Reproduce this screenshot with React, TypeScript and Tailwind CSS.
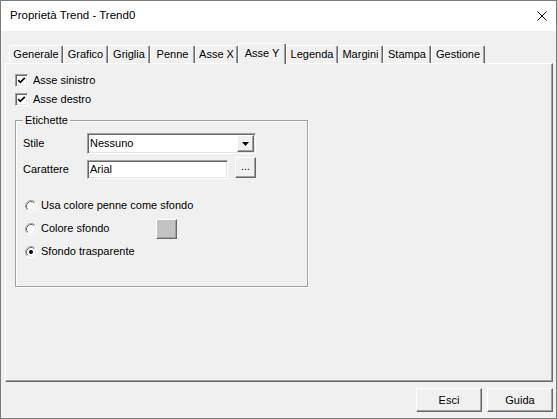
import React from "react";

const tabs: { label: string; cls: string; active?: boolean }[] = [
  { label: "Generale", cls: "w-[54px]" },
  { label: "Grafico", cls: "w-[45px]" },
  { label: "Griglia", cls: "w-[42px]" },
  { label: "Penne", cls: "w-[45px]" },
  { label: "Asse X", cls: "w-[43px]" },
  { label: "Asse Y", cls: "w-[48px]", active: true },
  { label: "Legenda", cls: "w-[52px]" },
  { label: "Margini", cls: "w-[45px]" },
  { label: "Stampa", cls: "w-[48px]" },
  { label: "Gestione", cls: "w-[54px]" },
];

const raised =
  "border border-t-white border-l-white border-r-[#696969] border-b-[#696969] shadow-[inset_-1px_-1px_0_#a0a0a0]";
const sunken =
  "border border-t-[#a0a0a0] border-l-[#a0a0a0] border-r-white border-b-white shadow-[inset_1px_1px_0_#696969,inset_-1px_-1px_0_#e3e3e3] bg-white";

function Check() {
  return (
    <div className={`w-[13px] h-[13px] flex items-center justify-center ${sunken}`}>
      <svg width="9" height="9" viewBox="0 0 9 9">
        <polyline points="1.2,4.2 3.3,6.4 7.8,1.8" fill="none" stroke="#000" strokeWidth="1.7" />
      </svg>
    </div>
  );
}

function Radio({ on }: { on?: boolean }) {
  return (
    <svg width="12" height="12" viewBox="0 0 12 12" className="shrink-0">
      <circle cx="6" cy="6" r="5.5" fill="#fff" />
      <path d="M2.11 9.89 A5.5 5.5 0 0 1 9.89 2.11" fill="none" stroke="#a0a0a0" />
      <path d="M9.89 2.11 A5.5 5.5 0 0 1 2.11 9.89" fill="none" stroke="#ffffff" />
      <path d="M2.82 9.18 A4.5 4.5 0 0 1 9.18 2.82" fill="none" stroke="#696969" />
      <path d="M9.18 2.82 A4.5 4.5 0 0 1 2.82 9.18" fill="none" stroke="#e3e3e3" />
      {on && <circle cx="6" cy="6" r="2" fill="#000" />}
    </svg>
  );
}

export default function App() {
  return (
    <div className="w-[557px] h-[419px] border border-[#7a7a7a] bg-[#f0f0f0] flex flex-col font-['Liberation_Sans',Arial,sans-serif] text-[11px] text-black leading-none">
      {/* Title bar */}
      <div className="h-[30px] bg-white flex items-center justify-between pl-[9px] pr-[9px] shrink-0">
        <span className="text-[11.5px]">Proprietà Trend - Trend0</span>
        <svg width="10" height="10" viewBox="0 0 10 10">
          <path d="M0.5 0.5 L9.5 9.5 M9.5 0.5 L0.5 9.5" stroke="#000" strokeWidth="1" />
        </svg>
      </div>

      {/* Body */}
      <div className="flex-1 flex flex-col pl-[4px] pr-[3px]">
        {/* Tabs */}
        <div className="h-[20px] mt-[12px] flex items-end pl-[4px]">
          {tabs.map((t) =>
            t.active ? (
              <div
                key={t.label}
                className={`${t.cls} h-[21px] -mb-[1px] relative z-10 bg-[#f0f0f0] flex items-center justify-center border-t border-l border-r border-t-white border-l-white border-r-[#696969] shadow-[inset_-1px_0_0_#a0a0a0] rounded-t-[2px] pb-[1px]`}
              >
                {t.label}
              </div>
            ) : (
              <div
                key={t.label}
                className={`${t.cls} h-[18px] flex items-center justify-center border-t border-l border-r border-t-white border-l-white border-r-[#696969] shadow-[inset_-1px_0_0_#a0a0a0] rounded-t-[2px]`}
              >
                {t.label}
              </div>
            )
          )}
        </div>

        {/* Panel */}
        <div className="h-[319px] border border-t-white border-l-white border-r-[#696969] border-b-[#696969] shadow-[inset_-1px_-1px_0_#a0a0a0] flex flex-col pl-[9px] pt-[7px]">
          <div className="h-[19px] flex items-center gap-[5px]">
            <Check />
            <span>Asse sinistro</span>
          </div>
          <div className="h-[19px] flex items-center gap-[5px]">
            <Check />
            <span>Asse destro</span>
          </div>

          {/* Group box */}
          <div className="mt-[11px] w-[293px] h-[167px] border border-[#a0a0a0] shadow-[1px_1px_0_#fff,inset_1px_1px_0_#fff] flex flex-col">
            <div className="-mt-[7px] ml-[7px] px-[2px] w-fit bg-[#f0f0f0] leading-[13px]">Etichette</div>

            <div className="mt-[6px] h-[21px] flex items-center pl-[7px]">
              <span className="w-[64px]">Stile</span>
              <div className={`w-[169px] h-[21px] flex items-center justify-between ${sunken}`}>
                <span className="pl-[2px]">Nessuno</span>
                <div className={`w-[17px] h-[17px] mr-[1px] bg-[#f0f0f0] flex items-center justify-center ${raised}`}>
                  <svg width="7" height="4" viewBox="0 0 7 4">
                    <path d="M0 0 H7 L3.5 4 Z" fill="#000" />
                  </svg>
                </div>
              </div>
            </div>

            <div className="mt-[3px] h-[22px] flex pl-[7px]">
              <span className="w-[64px] self-end leading-[19px]">Carattere</span>
              <div className={`w-[141px] h-[19px] self-end flex items-center ${sunken}`}>
                <span className="pl-[2px]">Arial</span>
              </div>
              <div className={`ml-[7px] w-[21px] h-[21px] bg-[#f0f0f0] flex items-end justify-center pb-[5px] ${raised}`}>
                ...
              </div>
            </div>

            <div className="mt-[15px] h-[23px] flex items-center pl-[9px] gap-[4px]">
              <Radio />
              <span>Usa colore penne come sfondo</span>
            </div>
            <div className="h-[23px] flex items-center pl-[9px] gap-[4px]">
              <Radio />
              <span className="w-[115px]">Colore sfondo</span>
              <div className={`w-[21px] h-[20px] bg-[#c3c3c3] -ml-[4px] ${raised}`} />
            </div>
            <div className="h-[23px] flex items-center pl-[9px] gap-[4px]">
              <Radio on />
              <span>Sfondo trasparente</span>
            </div>
          </div>
        </div>

        {/* Buttons */}
        <div className="mt-[6px] flex justify-end gap-[5px]">
          <div className={`w-[66px] h-[24px] bg-[#f0f0f0] flex items-center justify-center ${raised}`}>Esci</div>
          <div className={`w-[66px] h-[24px] bg-[#f0f0f0] flex items-center justify-center ${raised}`}>Guida</div>
        </div>
      </div>
    </div>
  );
}
